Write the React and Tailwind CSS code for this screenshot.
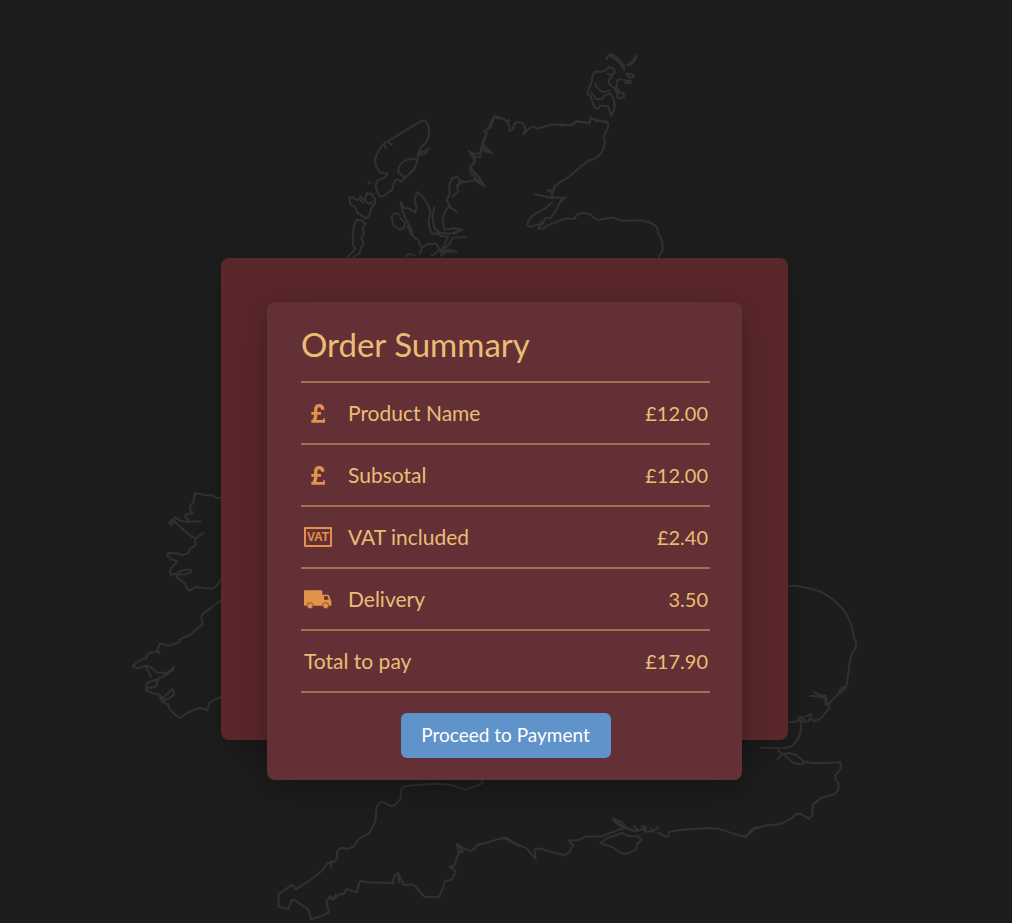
import React from "react";

function PoundIcon() {
  return (
    <svg viewBox="0 0 42 57" className="h-[19px] w-[14px]" fill="none" stroke="currentColor" aria-hidden="true">
      <path strokeWidth="10" d="M36 17Q34 5 25 5Q14 5 14 17V32Q15 44 8 50" />
      <path strokeWidth="8" d="M1 28H30M1 52H42" />
      <path strokeWidth="5" d="M39 43V53" />
    </svg>
  );
}

function VatIcon() {
  return (
    <span className="flex h-5 w-7 items-center justify-center rounded-[1px] border-2 border-[#e3924c] font-['Liberation_Sans_Narrow','Liberation_Sans',sans-serif] text-xs leading-none font-bold">
      VAT
    </span>
  );
}

function TruckIcon() {
  return (
    <svg viewBox="0 0 84 57" className="h-[19px] w-7" aria-hidden="true">
      <path fill="currentColor" d="M2 1h51q2 0 2 2v44H2q-2 0-2-2V3q0-2 2-2z" />
      <path
        fill="currentColor"
        fillRule="evenodd"
        d="M54 14h17q4 0 5 4l3 9 3 6v14H54zM60 19v10h14l-3-10z"
      />
      <g fill="currentColor" stroke="#633035" strokeWidth="2">
        <circle cx="18" cy="47" r="9" />
        <circle cx="65" cy="47" r="9" />
      </g>
    </svg>
  );
}

const rows = [
  { icon: <PoundIcon />, label: "Product Name", price: "£12.00" },
  { icon: <PoundIcon />, label: "Subsotal", price: "£12.00" },
  { icon: <VatIcon />, label: "VAT included", price: "£2.40" },
  { icon: <TruckIcon />, label: "Delivery", price: "3.50" },
];

// Each coast is drawn at three times its size on the map
function Coast({ x, y, d }) {
  return <path transform={`translate(${x} ${y}) scale(0.33333)`} d={d} />;
}

function CoastMap() {
  return (
    <svg
      viewBox="0 0 1012 923"
      preserveAspectRatio="xMidYMin slice"
      className="absolute inset-0 h-full w-full"
      fill="none"
      stroke="#323131"
      strokeWidth="6"
      strokeLinejoin="round"
      strokeLinecap="round"
      aria-hidden="true"
    >
      {/* Hebrides and Skye */}
      <Coast
        x={330}
        y={100}
        d="M270 65L284 61Q292 65 296 82Q300 105 290 125L276 139L265 160L262 180Q258 204 242 218L228 230L214 245L199 238L190 252L188 268L158 290L147 286L137 262L141 242L165 232L174 221L150 218L138 199L135 178L145 153L160 132L180 120L222 94zM162 134l7 12M175 125l9 9M205 219Q202 205 214 190Q236 172 260 179M209 218q10 16 22 10M265 158q19-2 34-14M264 163q16 4 28-8M115 245l5 4
        M57 293L66 292L83 301L92 290L104 301L111 280L123 281L134 295L135 310L124 324L119 345L107 356L95 346L82 339L76 322L62 314zM108 304q9 14 18 2M91 300l8 8M53 470L76 448L68 433L70 384L79 360L93 361L106 370L97 386L102 400L94 415L101 430L92 445L88 460L72 470"
      />
      <Coast
        x={330}
        y={100}
        d="M211 306L218 332L224 350L233 368L243 385L248 408L265 420L270 435L278 443L292 432L306 433L318 430L329 447L315 462L304 467M213 307L223 324L236 325L255 337L260 323L253 300L262 276L278 290L295 316L302 338L295 360L299 385L306 402L323 399L332 407L355 410L342 437L330 457L355 449L380 455M314 322L307 350L313 383L330 398L360 401L396 390M209 344L195 339L185 350L190 375L208 389L222 384L225 368L210 353M233 378L242 402L258 416M229 468Q240 457 253 467M276 446L269 462M333 468Q345 453 375 455M407 411L368 413L359 431L341 448M380 335L361 322L350 300L359 283L358 255L365 237L382 229L391 243L381 257L384 275L367 290M398 243L386 255M391 248L435 241L465 259L445 232L419 204L436 184L420 157L435 162L451 158L455 137L485 158L466 145L459 121L470 102L463 94L481 83L493 50L510 52M360 316L344 336L337 363L344 389L370 385L395 389L372 402"
      />
      {/* North coast down to the firth */}
      <Coast
        x={460}
        y={100}
        d="M27 154L45 175L41 187L30 205L31 219L42 228L48 240L60 242L75 259M33 206L60 235M42 170L60 171L63 147L82 156L96 158L78 144L66 130L76 115L80 100L72 95L86 83L95 62L105 48L112 55L131 56L139 64L147 60L143 70L149 80L149 94L158 89L163 72L174 66L190 70L196 86L191 102L207 85L222 79L230 86L252 80L277 73L337 76L352 64L375 68L389 69L392 52L412 64L438 64L445 73L442 88L430 111L436 124L430 147L420 164L402 177L386 181L363 199L334 225L285 257L278 279L262 270L276 272L277 294L222 283M278 292L315 294L305 297L291 326L273 353L257 354L247 373L232 374L212 380L202 378L205 362L220 345L260 322L277 307M318 291L301 307M236 383L245 388L264 376L315 356L344 356L352 342L370 338L389 343L412 360L456 353L486 362L543 361L574 369L590 381L595 400L606 423L608 451L596 470M245 365L235 387"
      />
      {/* Orkney */}
      <Coast
        x={560}
        y={40}
        d="M140 58L145 46L157 43L178 59L191 74L193 92M150 47L175 65L189 82M201 76L215 64L231 47L219 69L207 76M198 101L215 101L223 109L212 113L200 106M192 121L210 122L212 130L195 128M138 90L122 96L107 94L98 103L96 122L89 139L81 161L92 169L97 184L103 203L114 207L121 197L144 199L154 228L162 211L164 193L160 174L150 161L134 166L126 178L108 176L93 157M138 91L146 82L160 84L165 97L154 106L141 101M157 109L146 120L148 133L163 144L170 156L190 160L193 170L179 176L170 170L176 152L169 142L172 120L186 118M105 130L114 147L128 157L148 152M0 257L33 254L48 244L77 247L90 248L91 233L108 241L128 243L144 249"
      />
      {/* Ireland and west Wales */}
      <Coast
        x={120}
        y={480}
        d="M304 54L289 53L276 46L256 46L226 39L222 53L221 69L212 74L210 91L218 99L197 104L196 112L210 125L241 124M206 126L181 122L166 112L157 119L147 129L155 134L163 123L180 140L206 163L226 176L250 159M226 176L227 194L210 207L203 220L186 226L171 220L145 219L142 227L153 237L172 244L150 269L153 285L163 282L195 284L212 278L214 269L195 269L175 276L170 292L180 300L193 307L200 324L209 332L227 321L254 324L278 326L294 313L304 297
        M304 359L275 382L249 400L244 410L248 434L232 445L211 465L184 475L176 487L148 497L120 490L112 509L119 520L106 514L82 522L80 533L57 542L38 559L52 565L75 557L92 561L111 577L135 580L151 572L162 560L159 570L139 584L111 598L81 609L78 630L98 640L116 642L124 657L158 627L163 640L151 653L124 664L145 674L149 688L165 704L181 714L201 699L224 689L241 684L261 690L271 665L304 650M76 558L93 591M98 602L115 601L107 620L80 625M121 646L129 666"
      />
      {/* East Anglia and Kent */}
      <Coast
        x={740}
        y={570}
        d="M147 47Q190 47 240 64Q291 90 318 130Q340 173 342 204L349 219L347 235L336 250L329 277L323 325L318 353L291 376L265 402L269 415L257 427L243 445L223 453L210 447L206 454L188 455L181 448L164 456L147 455M210 378L235 379L255 384L257 404M223 367L247 377L258 376L262 406M319 350L303 354L297 367M199 438L213 433L210 447M175 442L190 441L193 454M178 447L184 467L180 492L172 510L155 529L133 535L63 533M112 568L123 554L145 549L168 555L185 569L195 577L230 580L302 577L301 599L286 616L286 628L296 640L294 661L282 673L244 684L219 703L216 738L207 746L180 731L168 733L154 746L121 762L75 767L43 778L20 797L0 798M115 542L139 560L160 579L181 583L203 574"
      />
      {/* Cornwall and Devon */}
      <Coast
        x={260}
        y={770}
        d="M668 30L663 42L616 59L573 45L525 41L480 44L430 49L424 57L421 88L405 105L391 108L372 97L359 97L350 112L346 154L328 190L306 201L292 212L281 230L264 236L241 233L231 244L232 264L221 276L201 280L188 301L151 330L108 358L96 344L80 356L56 371L56 411L85 416L96 389L105 391L145 419L154 448L194 434L207 426L199 396L210 378L221 389L236 373L250 373L260 357L290 367L300 333L320 337L399 339L403 319L414 309L422 326L431 345L459 343L476 360L494 381L537 380L547 360L555 333L575 329L586 307L580 297L568 291L584 286L591 260L605 240L592 222L615 237L630 242L641 239L651 226L690 215L730 203L750 214L780 229M213 274l1 18M210 378l4 10 8-6M226 375l3 8M591 222l5 30M605 237l4 10M414 310l4 27"
      />
      {/* South coast and the Isle of Wight */}
      <Coast
        x={500}
        y={740}
        d="M0 297L17 293L50 312L80 325L107 357L103 328L118 325L151 335L194 346L207 337L220 316L205 302L238 299L258 290L305 289L350 272L373 264L338 235L363 245L380 264L405 274L428 267L434 258L439 275L461 273L475 263M340 240L357 256L401 273M401 258L415 273M426 258l9 17M454 265l5 12M474 279L503 292L508 275L548 269L623 264L655 266L691 278L738 292L751 273L764 263L780 262M301 309L323 294L366 279L387 289L415 289L424 300L412 311L409 329L376 342L358 337L341 323z"
      />
    </svg>
  );
}

export default function App() {
  return (
    <main className="relative flex min-h-screen items-start justify-center overflow-hidden bg-[#1e1d1d] pt-[258px] pr-[3px] pb-36 font-[Lato,sans-serif] text-[#eabd75]">
      <CoastMap />

      <div className="relative w-full max-w-[567px] rounded-lg bg-[#5a272b] px-[46px] pt-11 shadow-[0_8px_24px_rgba(0,0,0,0.2)]">
        <section className="-mb-10 rounded-lg bg-[#633035] pt-[22px] pr-8 pb-[22px] pl-[34px] shadow-[0_10px_30px_rgba(0,0,0,0.3)]">
          <h1 className="pb-[17px] text-[33px] leading-10">Order Summary</h1>

          <table className="w-full border-t-2 border-[#a17250] text-[21px] leading-7">
            <tbody>
              {rows.map((row) => (
                <tr key={row.label} className="h-[62px] border-b-2 border-[#a17250]">
                  <th scope="row" className="p-0 text-left font-normal">
                    <span className="flex items-center">
                      <span className="ml-[3px] flex w-7 justify-center text-[#e3924c]">
                        {row.icon}
                      </span>
                      <span className="ml-4">{row.label}</span>
                    </span>
                  </th>
                  <td className="p-0 pr-[2px] text-right text-xl">{row.price}</td>
                </tr>
              ))}
              <tr className="h-[62px] border-b-2 border-[#a17250]">
                <th scope="row" className="p-0 pl-[3px] text-left font-normal">Total to pay</th>
                <td className="p-0 pr-[2px] text-right text-xl">£17.90</td>
              </tr>
            </tbody>
          </table>

          <button
            type="button"
            className="mx-auto mt-5 block h-[45px] w-[210px] rounded-md bg-[#5f93c9] text-[19px] text-white hover:bg-[#6b9ed3]"
          >
            Proceed to Payment
          </button>
        </section>
      </div>
    </main>
  );
}
